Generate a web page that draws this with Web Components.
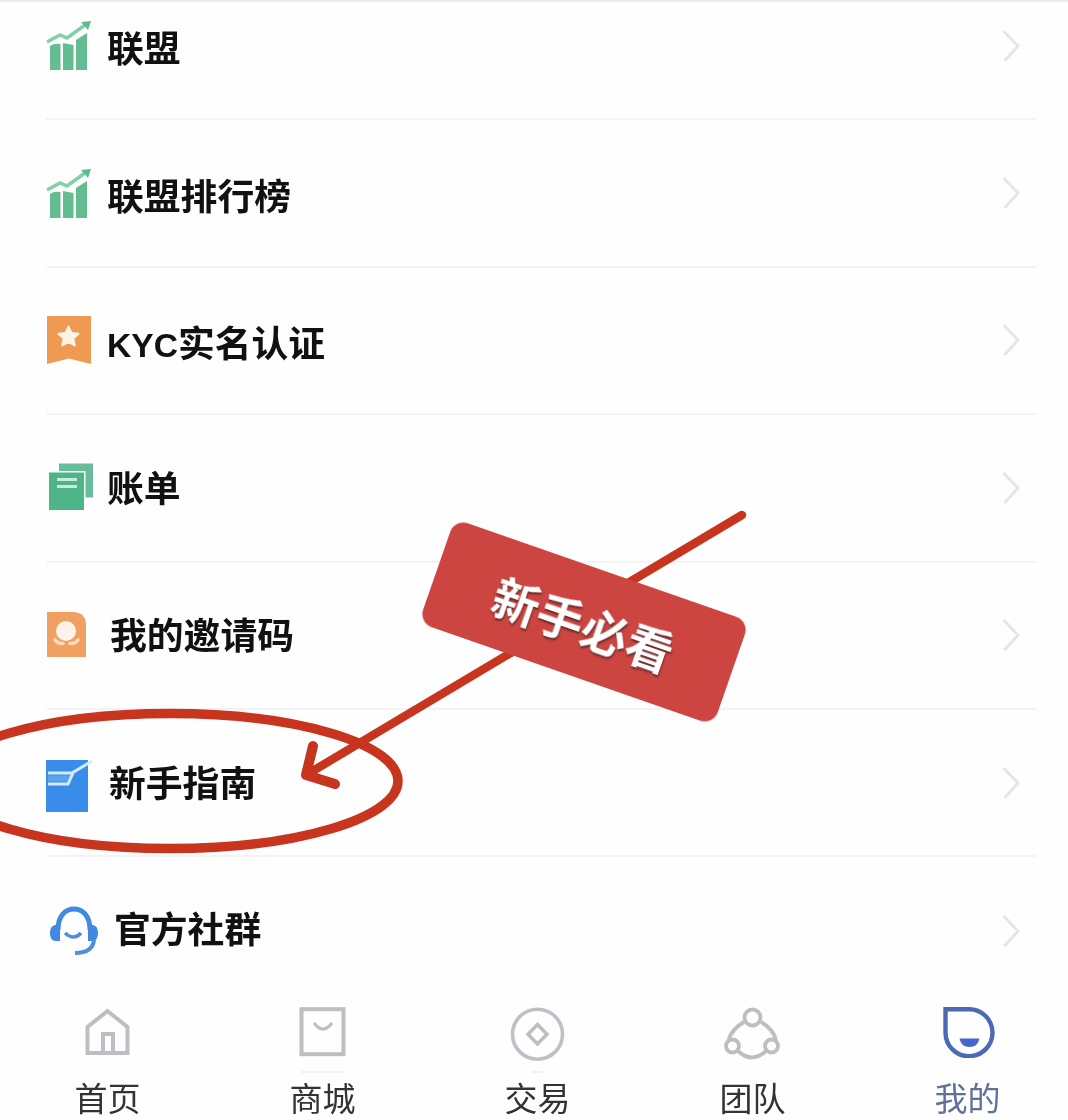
<!DOCTYPE html>
<html lang="zh">
<head>
<meta charset="utf-8">
<title>我的</title>
<style>
html,body{margin:0;padding:0;background:#fefefe;}
body{width:1068px;height:1120px;overflow:hidden;font-family:"Noto Sans CJK SC","Noto Sans",sans-serif;}
</style>
</head>
<body>
<template id="t-page">
<style>
:host{display:block;position:relative;width:1068px;height:1120px;overflow:hidden;background:#fefefe;border-top:2px solid #ececec;box-sizing:border-box;}
.list{display:flex;flex-direction:column;margin-top:-29px;}
</style>
<div class="list"><slot name="row"></slot></div>
<slot name="nav"></slot>
<slot name="over"></slot>
</template>

<template id="t-row">
<style>
:host{display:block;height:147.4px;box-sizing:border-box;padding:0 32px 0 46px;}
.in{height:100%;display:flex;align-items:center;border-bottom:2px solid #f3f3f3;box-sizing:border-box;}
:host([last]) .in{border-bottom:0;}
.ic{width:var(--iw,48px);flex:none;display:flex;align-items:center;transform:translate(var(--ix,0),var(--iy,0));}
.lb{flex:1;font:700 36.8px/1.2 "Noto Sans CJK SC","Noto Sans",sans-serif;color:#111;padding-left:var(--tx,13px);transform:translateY(var(--dy,0));filter:blur(.45px);}
.ch{flex:none;display:block;margin-right:15px;filter:blur(.7px);}
</style>
<div class="in"><span class="ic"><slot name="icon"></slot></span><span class="lb"><slot></slot></span>
<svg class="ch" width="20" height="36" viewBox="0 0 20 36"><path d="M2.500 3 L17 18 L3.500 33" fill="none" stroke="#e6e6e7" stroke-width="3"/></svg></div>
</template>

<template id="t-nav">
<style>
:host{display:grid;grid-template-columns:repeat(5,215px);height:115px;}
</style>
<slot></slot>
</template>

<template id="t-tab">
<style>
:host{display:flex;flex-direction:column;align-items:center;color:#333;}
:host([active]){color:#5f7199;}
.i{height:66px;padding-top:1px;box-sizing:border-box;display:flex;}
.t{font:400 33px/38px "Liberation Sans","Noto Sans CJK SC",sans-serif;margin-top:10.700px;filter:blur(.45px);}
</style>
<div class="i"><slot name="icon"></slot></div>
<div class="t"><slot></slot></div>
</template>

<template id="t-badge">
<style>
:host{position:absolute;left:428px;top:565px;width:312px;height:110px;border-radius:14px;background:#cd4541;transform:rotate(19.200deg);display:flex;align-items:center;justify-content:center;color:#fff;font:700 47px/1 "Noto Sans CJK SC","Noto Sans",sans-serif;text-shadow:1px 2px 2px #6b2b2b;filter:blur(.4px);}
</style>
<slot></slot>
</template>

<template id="t-arrow">
<style>
:host{position:absolute;left:0;top:-2px;width:1068px;height:1120px;display:block;pointer-events:none;filter:blur(.4px);}
svg{display:block;}
</style>
<svg width="1068" height="1120" viewBox="0 0 1068 1120" fill="none" stroke="#c7351f" stroke-linecap="round" stroke-linejoin="round">
<ellipse cx="170" cy="781" rx="228" ry="67.500" stroke-width="9.500"/>
<path d="M742 515 L306 775" stroke-width="8.500"/>
<path d="M313 746 L306 775 L335 784" stroke-width="10"/>
</svg>
</template>

<script>
function tpl(id){return document.getElementById(id).content.cloneNode(true);}
function reg(name,id){customElements.define(name,class extends HTMLElement{constructor(){super();this.attachShadow({mode:'open'}).appendChild(tpl(id));}});}
reg('app-page','t-page');reg('menu-row','t-row');reg('tab-bar','t-nav');reg('tab-item','t-tab');reg('note-badge','t-badge');reg('note-arrow','t-arrow');
const G='#bcbec3';
const ICONS={
chart:[48,52,`<path d="M4 28 Q8 25 14.500 26 V52 H4Z M17 25 L27.500 27 V52 H17Z M30 22 L41 15 V52 H30Z" fill="#64bc91"/><path d="M1 24 L14 17 L21 20 L39 7" fill="none" stroke="#7fd2a8" stroke-width="3.400"/><path d="M35 4 L45 3 L42 12Z" fill="#5dbb90"/>`],
kyc:[46,52,`<path d="M1 2 H45 V50 L23 44.500 L1 50Z" fill="#ee9a52"/><path d="M22.500 12.500 L25.500 19 L32.500 19.800 L27.300 24.500 L28.800 31.500 L22.500 27.800 L16.200 31.500 L17.700 24.500 L12.500 19.800 L19.500 19Z" fill="#fbf3e6" stroke="#fbf3e6" stroke-width="2" stroke-linejoin="round"/>`],
bill:[46,50,`<rect x="11" y="1.500" width="34" height="34" fill="#67bd9b"/><rect x="0.500" y="9" width="37" height="39.500" fill="#fbfdfc"/><rect x="1" y="10.500" width="35" height="37.500" fill="#4eb588"/><path d="M9 17.500 H29 M9 24.500 H29" stroke="#cdebdc" stroke-width="3"/>`],
invite:[42,48,`<path d="M1 1 H28 Q40 2 40 14 V46 H1Z" fill="#f0a162"/><circle cx="20" cy="20" r="10" fill="#fdf3e8"/><path d="M9 29 Q12 33 17 32.500 M32 29 Q29 33 24 32.500" fill="none" stroke="#fbdcc0" stroke-width="3.600" stroke-linecap="round"/>`],
guide:[48,54,`<rect x="0" y="2" width="42" height="52" fill="#3a8cea"/><path d="M2 20.500 H25" stroke="#5aa4ee" stroke-width="6"/><path d="M2 15 H26 L46 3 M2 26 H22 L27 15" fill="none" stroke="#d2ecfb" stroke-width="3"/>`],
head:[52,50,`<path d="M10 24 C10 9 18 3 26 3 C34 3 42 9 42 24" fill="none" stroke="#418ae2" stroke-width="5"/><path d="M12 19 V35 H7 Q2 34 2 27 Q2 20 7 19Z M40 19 V35 H45 Q50 34 50 27 Q50 20 45 19Z" fill="#3f89e2"/><path d="M46 34 C45 43 38 47 27 47" fill="none" stroke="#4a8fe0" stroke-width="4"/><path d="M17 27 Q26 35 33 27" fill="none" stroke="#4a8fe0" stroke-width="3.500"/>`],
home:[48,52,`<path d="M3.500 47 V21 L23.500 5 L43.500 21 V47Z M19 47 V28 H29 V47" fill="none" stroke="${G}" stroke-width="4"/>`],
shop:[48,68,`<rect x="2.500" y="3.200" width="42" height="45" fill="none" stroke="${G}" stroke-width="4"/><path d="M15 17 Q24 29 33 17" fill="none" stroke="${G}" stroke-width="3"/><path d="M2 66 H46" stroke="#ececec" stroke-width="1.500"/>`],
coin:[56,68,`<circle cx="27.500" cy="28.200" r="25" fill="none" stroke="#bcc0c7" stroke-width="3.600"/><path d="M27.500 18.500 L37 28.200 L27.500 38 L18 28.200Z" fill="none" stroke="${G}" stroke-width="3.600"/><path d="M21 66 H34" stroke="#ececec" stroke-width="1.500"/>`],
team:[58,56,`<circle cx="28.500" cy="11.500" r="8" fill="none" stroke="${G}" stroke-width="3.800"/><circle cx="8.500" cy="40" r="6.500" fill="none" stroke="${G}" stroke-width="3.800"/><circle cx="47.500" cy="40" r="6.500" fill="none" stroke="${G}" stroke-width="3.800"/><path d="M20 16 C13 20 7 26 4.500 34 M37 16 C44 20 50 26 52 34 M14 45 Q28 58 42 45" fill="none" stroke="${G}" stroke-width="3.800"/>`],
me:[54,52,`<path d="M4.500 3.200 H27.500 A23.500 23.500 0 1 1 4.500 26.700Z" fill="none" stroke="#4a69b6" stroke-width="4.400"/><path d="M18.500 32.500 H38.500 Q37 41 28.500 41 Q20 41 18.500 32.500Z" fill="#4566cc"/>`]
};
customElements.define('app-icon',class extends HTMLElement{
constructor(){super();this.attachShadow({mode:'open'});}
connectedCallback(){const[w,h,b]=ICONS[this.getAttribute('name')];
this.shadowRoot.innerHTML=`<style>:host{display:block;line-height:0;filter:blur(.5px);}</style><svg width="${w}" height="${h}" viewBox="0 0 ${w} ${h}">${b}</svg>`;}
});
</script>

<app-page>
<menu-row slot="row" style="--dy:-.5px;--iy:-2px"><app-icon slot="icon" name="chart"></app-icon>联盟</menu-row>
<menu-row slot="row" style="--dy:.5px;--iy:-1px"><app-icon slot="icon" name="chart"></app-icon>联盟排行榜</menu-row>
<menu-row slot="row" style="--dy:2px;--iy:0px"><app-icon slot="icon" name="kyc"></app-icon><span style="font:700 33.600px 'Liberation Sans',sans-serif">KYC</span>实名认证</menu-row>
<menu-row slot="row" style="--dy:-2px;--ix:2px;--iy:-1px"><app-icon slot="icon" name="bill"></app-icon>账单</menu-row>
<menu-row slot="row" style="--tx:16px;--dy:-2px;--iy:0px"><app-icon slot="icon" name="invite"></app-icon>我的邀请码</menu-row>
<menu-row slot="row" style="--tx:15px;--dy:-2.500px;--iy:2px"><app-icon slot="icon" name="guide"></app-icon>新手指南</menu-row>
<menu-row slot="row" last style="--tx:20px;--dy:-4px;--ix:2px;--iy:0px"><app-icon slot="icon" name="head"></app-icon>官方社群</menu-row>
<tab-bar slot="nav">
<tab-item><app-icon slot="icon" name="home"></app-icon>首页</tab-item>
<tab-item><app-icon slot="icon" name="shop"></app-icon>商城</tab-item>
<tab-item><app-icon slot="icon" name="coin"></app-icon>交易</tab-item>
<tab-item><app-icon slot="icon" name="team"></app-icon>团队</tab-item>
<tab-item active><app-icon slot="icon" name="me"></app-icon>我的</tab-item>
</tab-bar>
<note-arrow slot="over"></note-arrow>
<note-badge slot="over">新手必看</note-badge>
</app-page>
</body>
</html>
